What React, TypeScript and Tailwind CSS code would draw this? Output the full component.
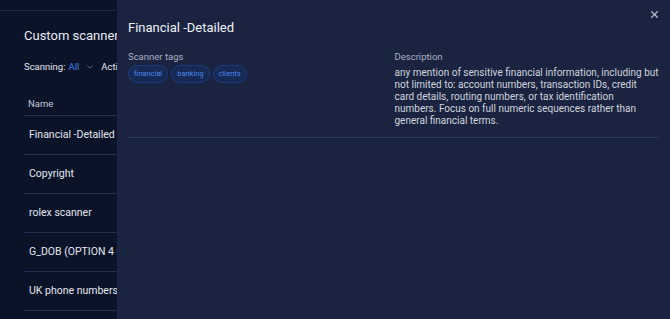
import { IoClose } from "react-icons/io5";
import { FiChevronDown } from "react-icons/fi";

const scanners = [
  "Financial -Detailed",
  "Copyright",
  "rolex scanner",
  "G_DOB (OPTION 4 prompt)",
  "UK phone numbers",
];

const tags = ["financial", "banking", "clients"];

// line breaks follow the reference's wrapping
const description = [
  "any mention of sensitive financial information, including but",
  "not limited to: account numbers, transaction IDs, credit",
  "card details, routing numbers, or tax identification",
  "numbers. Focus on full numeric sequences rather than",
  "general financial terms.",
];

export default function App() {
  return (
    <div
      className="relative h-[319px] w-[670px] overflow-hidden bg-[#0b1329] text-[#e3e6ee]"
      style={{ fontFamily: "Roboto, 'Noto Sans', sans-serif" }}
    >
      {/* page behind the drawer */}
      <div className="h-[11px] border-b border-[#1c2745]" />
      <div className="px-6">
        <h1 className="mt-[15px] text-[13px] leading-5 text-[#e6e9f0]">
          Custom scanners
        </h1>
        <div className="mt-[15px] flex items-center text-[9.5px] leading-3">
          <span>Scanning:</span>
          <span className="ml-[3px] text-[#3d7fe6]">All</span>
          <FiChevronDown className="ml-[6px] text-[10px] text-[#6b7591]" />
          <span className="ml-[6px]">Active</span>
        </div>
        <div className="mt-[25px] border-b border-[#22304f] pb-[5px] pl-1 text-[9.5px] leading-3 text-[#c4c9d6]">
          Name
        </div>
        {scanners.map((name) => (
          <div
            key={name}
            className="flex h-[39px] items-center border-b border-[#22304f] pl-[5px] text-[10.5px] whitespace-nowrap"
          >
            {name}
          </div>
        ))}
      </div>

      {/* drawer */}
      <div className="absolute top-0 right-0 bottom-0 w-[553px] bg-[#1a2440] px-[11px]">
        <button className="absolute top-[8px] right-[9px] text-[13px] text-[#c7ccd8]">
          <IoClose />
        </button>
        <h2 className="mt-[18px] text-[13px] leading-5 text-[#eef0f5]">
          Financial -Detailed
        </h2>
        <div className="mt-[13px] grid grid-cols-2 border-b border-[#2c3a5c] pb-[10px]">
          <div>
            <div className="text-[9.5px] leading-3 text-[#a9b0c2]">
              Scanner tags
            </div>
            <div className="mt-[2px] flex gap-[3px]">
              {tags.map((t) => (
                <span
                  key={t}
                  className="rounded-full border border-[#21397a] bg-[#162a55] px-[5px] py-[3px] text-[7.5px] leading-[10px] text-[#4d86ea]"
                >
                  {t}
                </span>
              ))}
            </div>
          </div>
          <div className="pl-px">
            <div className="text-[9.5px] leading-3 text-[#a9b0c2]">
              Description
            </div>
            <p className="mt-[4px] text-[10px] leading-3 whitespace-nowrap text-[#d0d4de]">
              {description.map((line, i) => (
                <span key={i} className="block">
                  {line}
                </span>
              ))}
            </p>
          </div>
        </div>
      </div>
    </div>
  );
}
